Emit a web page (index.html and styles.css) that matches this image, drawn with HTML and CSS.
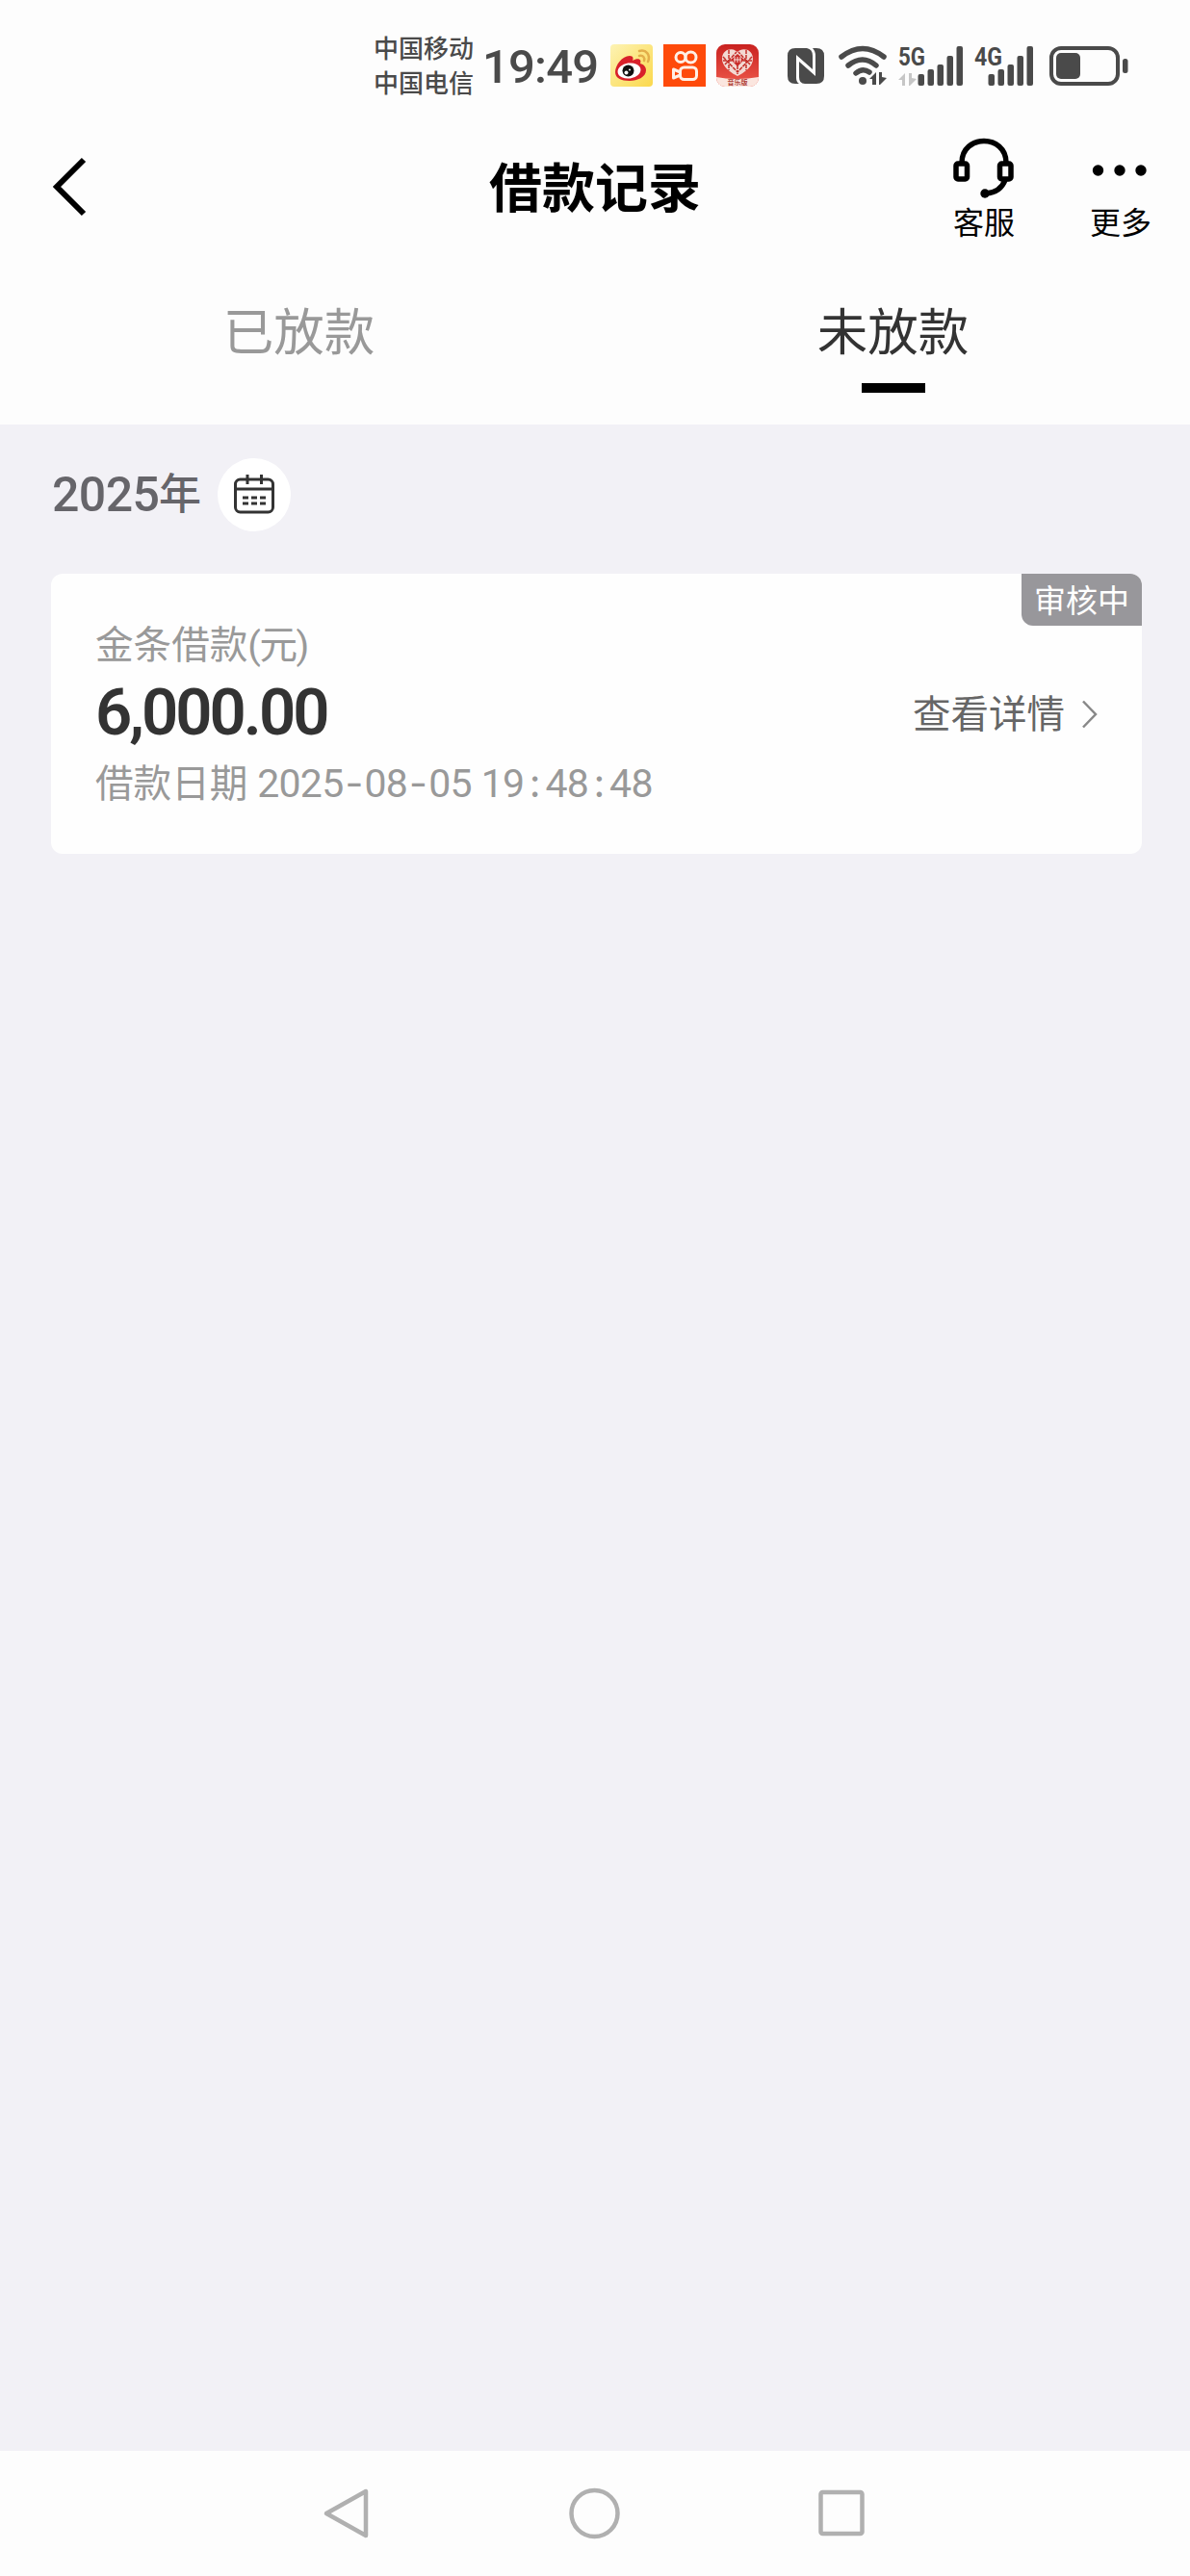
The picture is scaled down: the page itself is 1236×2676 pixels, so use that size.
FILE: index.html
```html
<!DOCTYPE html>
<html lang="zh-CN">
<head>
    <meta charset="UTF-8">
    <title>借款记录</title>
    <link rel="stylesheet" href="styles.css">
</head>
<body>
    <div class="status-bar">
        <div class="carriers">
            <span>中国移动</span>
            <span>中国电信</span>
        </div>
        <div class="time">19:49</div>
        <div class="apps">
            <svg width="44" height="44" viewBox="0 0 44 44">
                <defs>
                    <linearGradient id="weibo" x1="0" y1="0" x2="1" y2="1">
                        <stop offset="0" stop-color="#fdf3b4"/>
                        <stop offset="1" stop-color="#fbd84c"/>
                    </linearGradient>
                </defs>
                <rect width="44" height="44" rx="4" fill="url(#weibo)"/>
                <path d="M5 29C5 22 12 12 20 12C24 12 24 15 23 17C28 14 33 15 31 20C35 21 37 24 37 27C37 34 28 38 20 38C11 38 5 35 5 29Z" fill="#d8202a"/>
                <ellipse cx="19.500" cy="27.500" rx="12" ry="8" fill="#fff" transform="rotate(-8 19.500 27.500)"/>
                <circle cx="18.500" cy="27.500" r="6" fill="#111"/>
                <circle cx="16.500" cy="29.500" r="2" fill="#fff"/>
                <circle cx="20" cy="26.500" r="1" fill="#fff"/>
                <path d="M30 7C37 5 42 11 39 18M30 12C34 11 36 14 35 17" fill="none" stroke="#e3ae4a" stroke-width="2.500" stroke-linecap="round"/>
            </svg>
            <svg width="44" height="44" viewBox="0 0 44 44">
                <rect width="44" height="44" fill="#fe4a0a"/>
                <g fill="none" stroke="#fff0e6" stroke-width="3">
                    <circle cx="18" cy="13.500" r="5"/>
                    <circle cx="28.500" cy="13.500" r="5.500"/>
                    <rect x="17.500" y="24" width="17" height="12.500" rx="4"/>
                    <path d="M17.500 29L10.500 26V35L17.500 32" stroke-linejoin="round"/>
                </g>
            </svg>
            <svg width="44" height="44" viewBox="0 0 44 44">
                <defs>
                    <clipPath id="appClip"><rect width="44" height="44" rx="9"/></clipPath>
                    <linearGradient id="appRed" x1="0" y1="0" x2="0" y2="1">
                        <stop offset="0" stop-color="#c9211f"/>
                        <stop offset="1" stop-color="#ee5a4c"/>
                    </linearGradient>
                </defs>
                <g clip-path="url(#appClip)">
                    <rect width="44" height="44" fill="url(#appRed)"/>
                    <path d="M22 8C17 3 6 5 6 15C6 24 16 30 22 33C28 30 38 24 38 15C38 5 27 3 22 8Z" fill="#f3d9d3"/>
                    <path d="M13 6V27M31 6V27M7 13L22 29L37 13M9 21L21 8M35 21L23 8M7 17H16M28 17H37M22 22V31" fill="none" stroke="#c4302b" stroke-width="1.500" stroke-dasharray="4 1"/>
                    <path d="M22 10L29 16L22 23L15 16Z" fill="#c92b28"/>
                    <path d="M19 13V19M22 13V19M25 13V19M18 16H26" stroke="#f7ded8" stroke-width="1"/>
                    <path d="M0 34Q22 38 44 34V44H0Z" fill="#fbe6df"/>
                </g>
                <text x="22" y="42" class="app-name" text-anchor="middle">音乐版</text>
            </svg>
        </div>
        <svg class="nfc" width="38" height="38" viewBox="0 0 38 38">
            <path d="M8 0H20Q26 1 26 8V22L9 7V31Q9 35 12 37H8Q0 37 0 29V8Q0 0 8 0ZM26 0H30Q38 0 38 8V29Q38 37 30 37H18Q12 37 12 30V14L29 29V8Q29 3 26 0Z" fill="#4a4a4a"/>
        </svg>
        <svg class="wifi" width="50" height="41" viewBox="0 0 50 41">
            <g fill="none" stroke="#4a4a4a" stroke-width="5.500" stroke-linecap="round">
                <path d="M3 11Q25 -6 47 11"/>
                <path d="M10 20Q25 8 39 20"/>
                <path d="M18 28Q25 22 32 27"/>
            </g>
            <circle cx="25" cy="36" r="4" fill="#4a4a4a"/>
            <path d="M32 34L39 27V40H35V34ZM42 27H45V32L50 33L43 40H42Z" fill="#4a4a4a"/>
        </svg>
        <svg class="signal" width="68" height="42" viewBox="0 0 68 42">
            <text x="0" y="19.500" textLength="28" lengthAdjust="spacingAndGlyphs" class="net">5G</text>
            <path d="M0 35L7 28V41H4V35ZM11 28H14V33L19 34L12 41H11Z" fill="#c6c6c6"/>
            <g fill="#4a4a4a">
                <rect x="20.500" y="29" width="6.500" height="12" rx="2"/>
                <rect x="30.500" y="24" width="6.500" height="17" rx="2"/>
                <rect x="40.500" y="19" width="6.500" height="22" rx="2"/>
                <rect x="50.500" y="10" width="6.500" height="31" rx="2"/>
                <rect x="60.500" y="0" width="6.500" height="41" rx="2"/>
            </g>
        </svg>
        <svg class="signal-4g" width="62" height="42" viewBox="0 0 62 42">
            <text x="0" y="19.500" textLength="29" lengthAdjust="spacingAndGlyphs" class="net">4G</text>
            <g fill="#4a4a4a">
                <rect x="14.500" y="29" width="6.500" height="12" rx="2"/>
                <rect x="24.500" y="24" width="6.500" height="17" rx="2"/>
                <rect x="34.500" y="19" width="6.500" height="22" rx="2"/>
                <rect x="44.500" y="10" width="6.500" height="31" rx="2"/>
                <rect x="54.500" y="0" width="6.500" height="41" rx="2"/>
            </g>
        </svg>
        <svg class="battery" width="82" height="42" viewBox="0 0 82 42">
            <rect x="2" y="2" width="69" height="37" rx="10" fill="none" stroke="#4a4a4a" stroke-width="4"/>
            <rect x="7" y="7" width="25" height="27" rx="5" fill="#4a4a4a"/>
            <rect x="76" y="13" width="5.500" height="15" rx="2.500" fill="#4a4a4a"/>
        </svg>
    </div>

    <div class="header">
        <svg class="back" width="36" height="60" viewBox="0 0 36 60">
            <path d="M32 2L4 30L32 58" fill="none" stroke="#000" stroke-width="6"/>
        </svg>
        <h1>借款记录</h1>
        <div class="actions">
            <div class="action">
                <svg width="64" height="64" viewBox="0 0 64 64">
                    <g fill="none" stroke="#000" stroke-width="5.500">
                        <path d="M9 26C9 -4 55 -4 55 26"/>
                        <rect x="3" y="27" width="11.500" height="16" rx="2"/>
                        <rect x="48.500" y="27" width="11.500" height="16" rx="2"/>
                        <path d="M54 44Q49 57 34 58"/>
                    </g>
                    <circle cx="33" cy="58" r="4.700"/>
                </svg>
                <span>客服</span>
            </div>
            <div class="action">
                <svg width="64" height="64" viewBox="0 0 64 64">
                    <circle cx="8.500" cy="34" r="5.700"/>
                    <circle cx="31" cy="34" r="5.700"/>
                    <circle cx="53" cy="34" r="5.700"/>
                </svg>
                <span>更多</span>
            </div>
        </div>
    </div>

    <div class="tabs">
        <div class="tab">已放款</div>
        <div class="tab active">未放款</div>
    </div>

    <div class="content">
        <div class="year">
            <span class="year-number">2025</span><span class="year-unit">年</span>
            <div class="calendar">
                <svg width="42" height="42" viewBox="0 0 42 42">
                    <g fill="none" stroke="#333" stroke-width="3">
                        <rect x="1.500" y="5" width="39" height="34" rx="5"/>
                        <path d="M2 15H40M14 0V10M28.500 0V10"/>
                        <path d="M9 24H15M18 24H24M27 24H33M9 30H15M18 30H24M27 30H33"/>
                    </g>
                </svg>
            </div>
        </div>

        <div class="card">
            <div class="badge">审核中</div>
            <div class="info">
                <div class="label">金条借款<span class="unit">(元)</span></div>
                <div class="amount">6,000.00</div>
                <div class="date">借款日期 <span class="digits">2025<i>-</i>08<i>-</i>05</span> <span class="digits">19<i>:</i>48<i>:</i>48</span></div>
            </div>
            <div class="detail">
                <span>查看详情</span>
                <svg width="18" height="30" viewBox="0 0 18 30">
                    <path d="M2 1.500L15 15L2 28.500" fill="none" stroke="#888" stroke-width="2.500"/>
                </svg>
            </div>
        </div>
    </div>

    <div class="nav-bar">
        <svg width="54" height="54" viewBox="0 0 54 54">
            <path d="M45 4V50L4 27Z" fill="none" stroke="#b0b0b0" stroke-width="4.500" stroke-linejoin="round"/>
        </svg>
        <svg width="54" height="54" viewBox="0 0 54 54">
            <circle cx="26.500" cy="27" r="24" fill="none" stroke="#b0b0b0" stroke-width="4.500"/>
        </svg>
        <svg width="54" height="54" viewBox="0 0 54 54">
            <rect x="5.500" y="5" width="43" height="43" rx="2" fill="none" stroke="#b0b0b0" stroke-width="4.500"/>
        </svg>
    </div>
</body>
</html>
```

FILE: styles.css
```css
* {
    box-sizing: border-box;
}
body {
    margin: 0;
    height: 2676px;
    display: flex;
    flex-direction: column;
    font-family: Roboto, "Noto Sans CJK SC", sans-serif;
    background-color: #f2f1f6;
    color: #333;
}
svg {
    display: block;
    flex-shrink: 0;
    overflow: visible;
}
.status-bar {
    display: flex;
    height: 136px;
    padding-left: 388px;
    background-color: #fdfdfd;
    color: #4a4a4a;
}
.carriers {
    display: flex;
    flex-direction: column;
    width: 113px;
    padding-top: 33px;
    font-size: 26px;
    font-weight: 500;
    line-height: 36px;
    white-space: nowrap;
}
.time {
    width: 133px;
    padding-top: 40px;
    font-size: 49px;
    font-weight: 500;
    line-height: 60px;
    letter-spacing: -0.8px;
}
.apps {
    display: flex;
    gap: 11px;
    width: 184px;
    padding-top: 46px;
}
.app-name {
    font-size: 7px;
    font-weight: 700;
    fill: #b0433a;
}
.nfc {
    margin: 50px 15px 0 0;
}
.wifi {
    margin: 48px 12px 0 0;
}
.signal {
    margin: 48px 11px 0 0;
}
.signal-4g {
    margin: 48px 16px 0 0;
}
.battery {
    margin-top: 48px;
}
.net {
    font-size: 26px;
    font-weight: 700;
    fill: #4a4a4a;
}
.header {
    display: grid;
    grid-template-columns: 1fr auto 1fr;
    height: 154px;
    background-color: #fdfdfd;
    color: #000;
}
.back {
    margin: 28px 0 0 55px;
}
h1 {
    margin: 0;
    padding-top: 20px;
    font-size: 55px;
    font-weight: 700;
    line-height: 80px;
}
.actions {
    display: flex;
    justify-content: flex-end;
    gap: 78px;
    padding: 7px 40px 0 0;
}
.action {
    width: 64px;
    font-size: 32px;
    line-height: 48px;
}
.action span {
    display: block;
    margin-top: 1px;
}
.tabs {
    display: flex;
    height: 151px;
    padding-left: 2px;
    background-color: #fdfdfd;
}
.tab {
    display: flex;
    flex-direction: column;
    align-items: center;
    width: 50%;
    padding-top: 16px;
    font-size: 52.5px;
    line-height: 80px;
    color: #999;
}
.tab.active {
    color: #333;
}
.tab.active::after {
    content: "";
    width: 66px;
    height: 10px;
    margin-top: 12px;
    background-color: #000;
}
.content {
    flex: 1;
    padding: 35px 50px 0 53px;
}
.year {
    display: flex;
    align-items: center;
    height: 76px;
    padding-left: 1px;
    color: #66656a;
}
.year-number {
    width: 111px;
    font-size: 50px;
    font-weight: 500;
    letter-spacing: -0.6px;
}
.year-unit {
    font-size: 44px;
    font-weight: 500;
    line-height: 60px;
}
.calendar {
    display: flex;
    align-items: center;
    justify-content: center;
    width: 76px;
    height: 76px;
    margin-left: 17px;
    border-radius: 50%;
    background-color: #fff;
}
.card {
    position: relative;
    display: flex;
    justify-content: space-between;
    height: 291px;
    margin-top: 44px;
    padding: 45px 45px 0 46px;
    border-radius: 12px;
    background-color: #fefefe;
}
.badge {
    position: absolute;
    top: 0;
    right: 0;
    width: 125px;
    height: 54px;
    border-radius: 0 12px 0 12px;
    background-color: #98979b;
    color: #fff;
    font-size: 33px;
    line-height: 57px;
    text-align: center;
}
.label, .date {
    font-size: 39.6px;
    line-height: 60px;
    color: #999;
    white-space: nowrap;
}
.unit {
    letter-spacing: -1.5px;
}
.amount {
    height: 82px;
    font-size: 67px;
    font-weight: 600;
    line-height: 78px;
    letter-spacing: -3px;
}
.digits {
    font-size: 41px;
    letter-spacing: -0.7px;
}
.digits i {
    display: inline-block;
    width: 22px;
    font-family: Inter, sans-serif;
    font-style: normal;
    text-align: center;
}
.detail {
    display: flex;
    align-items: center;
    gap: 17px;
    height: 60px;
    margin-top: 71px;
    font-size: 39.5px;
    color: #666;
}
.detail span {
    margin-top: -7px;
}
.nav-bar {
    display: flex;
    justify-content: center;
    gap: 202px;
    height: 130px;
    padding-top: 38px;
    background-color: #fdfdfd;
}
```
